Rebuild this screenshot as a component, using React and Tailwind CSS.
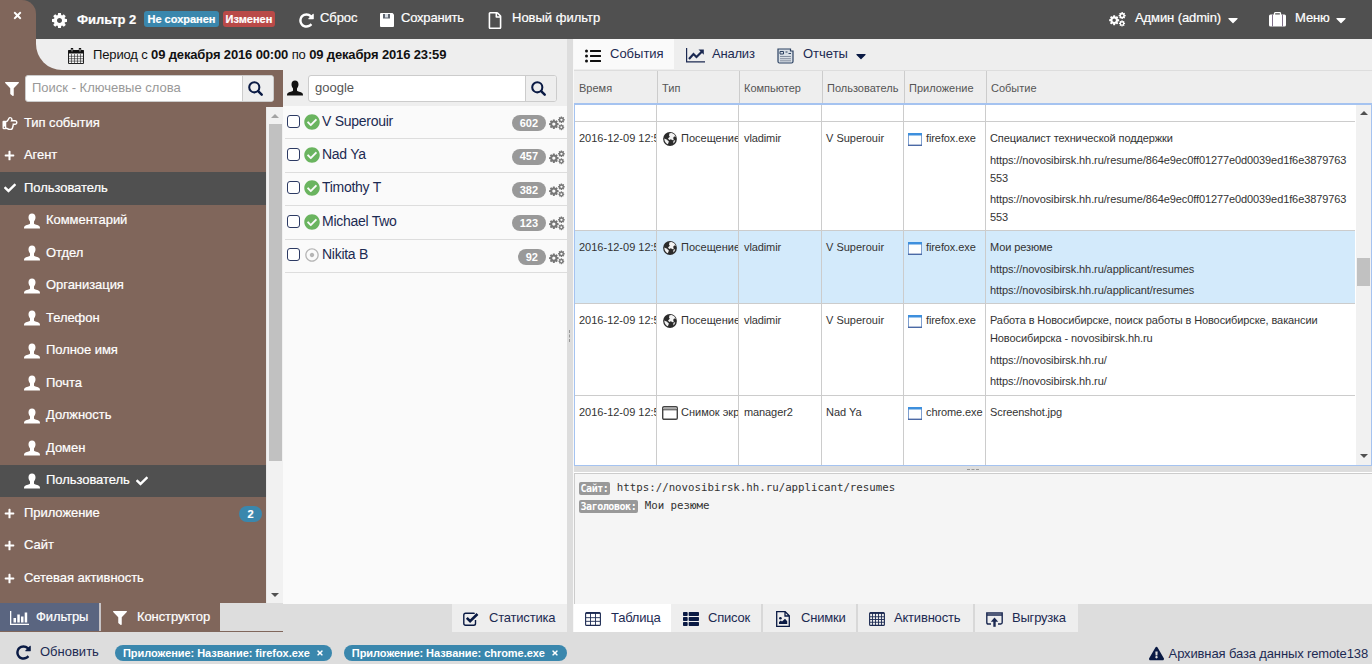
import { useState } from 'react';
import clsx from 'clsx';
import {
  FaCaretDown,
  FaCheck,
  FaCheckCircle,
  FaExclamationTriangle,
  FaFilter,
  FaListUl,
  FaPlus,
  FaRegDotCircle,
  FaRegFile,
  FaRegHandPointRight,
  FaThList,
  FaTimes,
} from 'react-icons/fa';

const gearPath =
  'M1152 896q0-106-75-181t-181-75-181 75-75 181 75 181 181 75 181-75 75-181zm512-109v222q0 12-8 23t-20 13l-185 28q-19 54-39 91 35 50 107 138 10 12 10 25t-9 23q-27 37-99 108t-94 71q-12 0-26-9l-138-108q-44 23-91 38-16 136-29 186-7 28-36 28h-222q-14 0-24.500-8.500t-11.500-21.500l-28-184q-49-16-90-37l-141 107q-10 9-25 9-14 0-25-11-126-114-165-168-7-10-7-23 0-12 8-23 15-21 51-66.500t54-70.500q-27-50-41-99l-183-27q-13-2-21-12.500t-8-23.500v-222q0-12 8-23t19-13l186-28q14-46 39-92-40-57-107-138-10-12-10-24 0-10 9-23 26-36 98.500-107.500t94.500-71.500q13 0 26 10l138 107q44-23 91-38 16-136 29-186 7-28 36-28h222q14 0 24.500 8.500t11.500 21.500l28 184q49 16 90 37l142-107q9-9 24-9 13 0 25 10 129 119 165 170 7 8 7 22 0 12-8 23-15 21-51 66.500t-54 70.500q26 50 41 98l183 28q13 2 21 12.500t8 23.500z';

function GearIcon({ className }) {
  return (
    <svg viewBox="128 128 1536 1536" fill="currentColor" className={className}>
      <path d={gearPath} />
    </svg>
  );
}

function GearsIcon({ className }) {
  return (
    <svg viewBox="0 0 1900 1700" fill="currentColor" className={className}>
      <path d={gearPath} transform="translate(-90 270) scale(.74)" />
      <path d={gearPath} transform="translate(1010 -60) scale(.52)" />
      <path d={gearPath} transform="translate(1060 890) scale(.45)" />
    </svg>
  );
}

function RepeatIcon({ className }) {
  return (
    <svg viewBox="0 0 1792 1792" fill="currentColor" className={className}>
      <path d="M1664 256v448q0 26-19 45t-45 19h-448q-42 0-59-40-17-39 14-69l138-138q-148-137-349-137-104 0-198.500 40.500t-163.500 109.500-109.500 163.500-40.500 198.500 40.500 198.500 109.500 163.500 163.500 109.500 198.500 40.500q119 0 225-52t179-147q7-10 23-12 15 0 25 9l137 138q9 8 9.500 20.500t-7.500 22.500q-109 132-264 204.500t-327 72.500q-156 0-298-61t-245-164-164-245-61-298 61-298 164-245 245-164 298-61q147 0 284.500 55.500t244.500 156.500l130-129q29-31 70-14 39 17 39 59z" />
    </svg>
  );
}

function SearchIcon({ className }) {
  return (
    <svg viewBox="0 0 16 16" fill="none" stroke="currentColor" className={className}>
      <circle cx="6.700" cy="6.700" r="5.400" strokeWidth="2.200" />
      <path d="M10.800 10.800l3.800 3.800" strokeWidth="2.600" strokeLinecap="round" />
    </svg>
  );
}

function PersonIcon({ className }) {
  return (
    <svg viewBox="0 0 16 16" fill="currentColor" className={className}>
      <path d="M8 .5c2.200 0 3.500 1.400 3.500 3.700 0 1.700-.6 3.200-1.500 4.200v2c0 .5.400.7.900.9 1.500.5 3.400 1 4.300 1.700.6.500.8 1.200.8 2.500H0c0-1.300.2-2 .8-2.500.9-.7 2.800-1.200 4.300-1.700.5-.2.9-.4.9-.9v-2c-.9-1-1.500-2.500-1.500-4.200C4.500 1.900 5.800.5 8 .5z" />
    </svg>
  );
}

function SaveIcon({ className }) {
  return (
    <svg viewBox="0 0 14 14" className={className}>
      <path d="M1 0h11.500L14 1.500V13q0 1-1 1H1q-1 0-1-1V1q0-1 1-1z" fill="#fff" />
      <path d="M3 1h7v4.500H3z" fill="#5f6670" />
      <path d="M5 1h3v3.500H5z" fill="#d5dbe3" />
    </svg>
  );
}

function SuitcaseIcon({ className }) {
  return (
    <svg viewBox="0 0 17 15" className={className}>
      <path d="M5.500 3V1.500q0-.8.800-.8h4.400q.8 0 .8.800V3" fill="none" stroke="#fff" strokeWidth="1.300" />
      <rect y="2.500" width="17" height="12" rx="1.500" fill="#fff" />
      <path d="M3.500 2.500v12M13.500 2.500v12" stroke="#80708a" strokeWidth="1" />
    </svg>
  );
}

function ChartIcon({ className }) {
  return (
    <svg viewBox="0 0 19 15" className={className} fill="none" stroke="currentColor">
      <path d="M.6 0v13.900H19" strokeWidth="1.200" />
      <path d="M3 11l4.500-5 3 3L16 3.500" strokeWidth="2.200" />
      <path d="M12.500 1.500h5.300v5.200z" fill="currentColor" stroke="none" />
    </svg>
  );
}

function CheckSquareIcon({ className }) {
  return (
    <svg viewBox="0 0 16 14" className={className} fill="none" stroke="currentColor">
      <path d="M12.500 8v3.500q0 1.800-1.800 1.800H2.600Q.8 13.300.8 11.500V3q0-1.800 1.800-1.800h8q.8 0 1.200.3" strokeWidth="1.400" />
      <path d="M3.800 5.800l3.300 3.300L14.500 2" strokeWidth="2.600" />
    </svg>
  );
}

function CalendarIcon({ className }) {
  return (
    <svg viewBox="0 0 16 16" className={className}>
      <path d="M.5 2.500h15v13H.5z" fill="#f5f5f5" stroke="#222" />
      <path d="M.5 2h15v3.500H.5z" fill="#111" />
      <path d="M.5 8.300h15M.5 10.700h15M.5 13.100h15M3.500 6v9.500M6.500 6v9.500M9.500 6v9.500M12.500 6v9.500" stroke="#222" strokeWidth=".6" />
      <path d="M4 .8v2.700M12 .8v2.700" stroke="#111" strokeWidth="2.400" strokeLinecap="round" />
      <path d="M4 1v2.500M12 1v2.500" stroke="#ddd" strokeWidth=".8" />
    </svg>
  );
}

function GlobeIcon({ className }) {
  return (
    <svg viewBox="0 0 14 14" className={className}>
      <circle cx="7" cy="7" r="6.900" fill="#2b2b2b" />
      <path d="M6.500 1.200l2.200-.2 2.500 1.300 1.700 2.500-1.800-.3-1 1.500.8 1.500-1.200.7-1.900-1L6.300 8 5 6.500l1.800-1.700L6 3.500z" fill="#f3f3f3" />
      <path d="M1.200 6.500l2.300 1 2.300 1.800-.3 1.500-.7 1.500-1.700-1-1.300-2z" fill="#f3f3f3" />
      <path d="M10.300 8.700l1.900-.7-.4 2-1.600 1.500z" fill="#cfcfcf" />
    </svg>
  );
}

function WindowIcon({ className }) {
  return (
    <svg viewBox="0 0 14 13" className={className}>
      <path d="M.5.500h13v12H.5z" fill="#fdfefe" stroke="#7f9fcf" />
      <path d="M0 0h14v2.500H0z" fill="#3d8fdd" />
      <path d="M0 12.300h14" stroke="#4a69a5" strokeWidth="1.400" />
    </svg>
  );
}

function ScreenIcon({ className }) {
  return (
    <svg viewBox="0 0 16 14" className={className}>
      <rect x=".7" y=".7" width="14.600" height="12.600" rx="1.300" fill="#fff" stroke="#444" strokeWidth="1.400" />
      <path d="M1.400 2.500h13.200" stroke="#aaa" strokeWidth="1.600" />
      <path d="M1 3.800h14" stroke="#444" strokeWidth="1" />
    </svg>
  );
}

function BarsIcon({ className }) {
  return (
    <svg viewBox="0 0 19 14" className={className} fill="currentColor">
      <path d="M0 0h1.300v12.700H19V14H0zM3.500 7H6v4.500H3.500zM7.300 3.500h2.500v8H7.300zM11 5.500h2.500v6H11zM14.700 1.500h2.500v10h-2.500z" />
    </svg>
  );
}

function GridIcon({ className, rows = 3, cols = 3 }) {
  const lines = [];
  for (let i = 1; i < cols; i++) lines.push(`M${(i * 15) / cols + 0.5} 1v12`);
  for (let i = 1; i < rows; i++) lines.push(`M1 ${2 + (i * 11) / rows}h14`);
  return (
    <svg viewBox="0 0 16 14" className={className} fill="none" stroke="currentColor">
      <rect x=".6" y=".6" width="14.800" height="12.800" rx="1" strokeWidth="1.100" />
      <path d="M1 1.200h14" strokeWidth="1.400" />
      <path d={lines.join('')} strokeWidth=".9" />
    </svg>
  );
}

function ReportIcon({ className }) {
  return (
    <svg viewBox="0 0 17 16" className={className} fill="none" stroke="#2c4262">
      <path d="M1 1h12.500v2H16v10.500q0 1.500-1.500 1.500h-12Q1 15 1 13.500z" fill="#d8dfe6" strokeWidth="1.200" />
      <path d="M3 3.500h3.500v2.500H3zM8.500 4h2M11.500 5.500H14" strokeWidth="1" />
      <path d="M3 8.500h11M3 10.700h11M3 12.800h11" stroke="#7c8798" strokeWidth=".9" />
    </svg>
  );
}

function PictureIcon({ className }) {
  return (
    <svg viewBox="0 0 14 16" className={className} fill="none" stroke="currentColor" strokeWidth="1.300">
      <path d="M.7.700h8.500l4.100 4v10.600H.7zM9 1v4h4" />
      <path d="M3 13v-2l1.800-1.500 1.200 1L9 7.800l2.200 2.400V13z" fill="currentColor" stroke="none" />
      <circle cx="4.400" cy="7.300" r="1.300" fill="currentColor" stroke="none" />
    </svg>
  );
}

function UploadIcon({ className }) {
  return (
    <svg viewBox="0 0 17 15" className={className} fill="none" stroke="currentColor" strokeWidth="1.400">
      <path d="M5 12H2.200Q.8 12 .8 10.600V1h15.400v9.600q0 1.400-1.400 1.400H12M1 3h15" />
      <path d="M8.500 14.800V7.500" strokeWidth="2.400" />
      <path d="M4.800 9.700L8.500 5.500l3.700 4.200z" fill="currentColor" stroke="none" />
    </svg>
  );
}

const filterGroups = [
  { label: 'Тип события', icon: 'hand' },
  { label: 'Агент', icon: 'plus' },
  { label: 'Пользователь', icon: 'check', active: true },
  { label: 'Комментарий', child: true },
  { label: 'Отдел', child: true },
  { label: 'Организация', child: true },
  { label: 'Телефон', child: true },
  { label: 'Полное имя', child: true },
  { label: 'Почта', child: true },
  { label: 'Должность', child: true },
  { label: 'Домен', child: true },
  { label: 'Пользователь', child: true, active: true, checked: true },
  { label: 'Приложение', icon: 'plus', count: 2 },
  { label: 'Сайт', icon: 'plus' },
  { label: 'Сетевая активность', icon: 'plus' },
];

const users = [
  { name: 'V Superouir', count: 602, online: true },
  { name: 'Nad Ya', count: 457, online: true },
  { name: 'Timothy T', count: 382, online: true },
  { name: 'Michael Two', count: 123, online: true },
  { name: 'Nikita B', count: 92, online: false },
];

const columns = ['Время', 'Тип', 'Компьютер', 'Пользователь', 'Приложение', 'Событие'];

const resumeUrl = ['https://novosibirsk.hh.ru/resume/864e9ec0ff01277e0d0039ed1f6e3879763', '553'];

const events = [
  {
    height: 'h-[109px]',
    type: 'Посещение',
    computer: 'vladimir',
    user: 'V Superouir',
    app: 'firefox.exe',
    lines: [['Специалист технической поддержки'], resumeUrl, resumeUrl],
  },
  {
    height: 'h-[73px]',
    type: 'Посещение',
    computer: 'vladimir',
    user: 'V Superouir',
    app: 'firefox.exe',
    selected: true,
    lines: [
      ['Мои резюме'],
      ['https://novosibirsk.hh.ru/applicant/resumes'],
      ['https://novosibirsk.hh.ru/applicant/resumes'],
    ],
  },
  {
    height: 'h-[92px]',
    type: 'Посещение',
    computer: 'vladimir',
    user: 'V Superouir',
    app: 'firefox.exe',
    lines: [
      ['Работа в Новосибирске, поиск работы в Новосибирске, вакансии', 'Новосибирска - novosibirsk.hh.ru'],
      ['https://novosibirsk.hh.ru/'],
      ['https://novosibirsk.hh.ru/'],
    ],
  },
  {
    height: 'h-[69px]',
    type: 'Снимок экр',
    screen: true,
    computer: 'manager2',
    user: 'Nad Ya',
    app: 'chrome.exe',
    lines: [['Screenshot.jpg']],
  },
];

function TopBar() {
  return (
    <header className="flex h-[39px] shrink-0 bg-[#505050] text-[13px] text-white">
      <div className="w-9 shrink-0 rounded-tr-[14px] bg-[#80665b] pt-[10px] pl-3">
        <FaTimes className="size-[11px]" />
      </div>
      <div className="flex h-[36px] flex-1 items-center [-webkit-text-stroke:0.2px]">
        <GearIcon className="mt-[5px] ml-4 size-[15px]" />
        <span className="mt-[3px] ml-[10px] w-[67px] font-bold">Фильтр 2</span>
        <span className="mt-[2px] flex h-4 w-[75px] items-center justify-center rounded-[3px] bg-[#3a87ad] text-[11px] font-bold">
          Не сохранен
        </span>
        <span className="mt-[2px] ml-1 flex h-4 w-[52px] items-center justify-center rounded-[3px] bg-[#b94a48] text-[11px] font-bold">
          Изменен
        </span>
        <RepeatIcon className="mt-1 ml-[23px] size-[17px]" />
        <span className="ml-[5px] w-[60px] tracking-[-0.1px]">Сброс</span>
        <SaveIcon className="mt-[3px] size-[14px]" />
        <span className="ml-[7px] w-[87px] tracking-[-0.2px]">Сохранить</span>
        <FaRegFile className="mt-1 h-[17px] w-[14px]" />
        <span className="ml-[10px]">Новый фильтр</span>
        <GearsIcon className="mt-[3px] ml-auto h-[15px] w-[17px]" />
        <span className="ml-[9px] w-[90px] tracking-[-0.1px]">Админ (admin)</span>
        <FaCaretDown className="mt-[3px] size-4" />
        <SuitcaseIcon className="mt-[3px] ml-[28px] h-[15px] w-[17px]" />
        <span className="ml-[9px] w-[38px] tracking-[-0.1px]">Меню</span>
        <FaCaretDown className="mt-[3px] mr-[23px] size-4" />
      </div>
    </header>
  );
}

function SearchBox({ value, placeholder, onChange }) {
  return (
    <div className="flex h-[27px] w-[249px] overflow-hidden rounded-[3px] border border-[#ccc] bg-white">
      <input
        className="w-[216px] px-[6px] pb-px text-[13px] text-[#555] outline-none placeholder:text-[#999]"
        value={value}
        placeholder={placeholder}
        onChange={(e) => onChange(e.target.value)}
      />
      <button className="flex flex-1 items-center justify-center border-l border-[#ccc] bg-[#eee] pr-[5px]">
        <SearchIcon className="size-[15px] text-[#0a1a44]" />
      </button>
    </div>
  );
}

function FilterRow({ item }) {
  return (
    <li
      className={clsx(
        'flex h-[32.5px] items-center pb-[2px] text-[13px] tracking-[-0.05px] text-white [-webkit-text-stroke:0.2px]',
        item.active && 'bg-[#505050]'
      )}
    >
      {item.child ? (
        <PersonIcon className="mt-[2px] mr-[6px] ml-6 size-4" />
      ) : (
        <span className="mt-[2px] flex w-6 items-center pl-[2px]">
          {item.icon === 'hand' && <FaRegHandPointRight className="h-[15px] w-4" />}
          {item.icon === 'plus' && <FaPlus className="ml-[2px] size-[11px]" />}
          {item.icon === 'check' && <FaCheck className="ml-[2px] size-3" />}
        </span>
      )}
      <span>{item.label}</span>
      {item.checked && <FaCheck className="mt-[2px] ml-[6px] size-3" />}
      {item.count && (
        <span className="mt-1 mr-1 ml-auto flex h-4 w-[23px] items-center justify-center rounded-full bg-[#3a87ad] text-[11px] font-bold">
          {item.count}
        </span>
      )}
    </li>
  );
}

function Sidebar() {
  const [query, setQuery] = useState('');
  return (
    <aside className="flex w-[283px] shrink-0 flex-col bg-[#80665b]">
      <div className="flex h-[37px] shrink-0 pt-[5px]">
        <FaFilter className="mt-[7px] mr-[6px] ml-[5px] size-[14px] text-white" />
        <SearchBox value={query} placeholder="Поиск - Ключевые слова" onChange={setQuery} />
      </div>
      <div className="flex min-h-0 flex-1">
        <ul className="w-[266px]">
          {filterGroups.map((item, i) => (
            <FilterRow key={i} item={item} />
          ))}
        </ul>
        <div className="flex w-[17px] flex-col items-center border-l border-[#e8e8e8] bg-[#f1f1f1]">
          <span className="mt-[7px] border-x-4 border-b-4 border-transparent border-b-[#a3a3a3]" />
          <div className="mt-[6px] h-[337px] w-[13px] bg-[#c1c1c1]" />
          <span className="mt-auto mb-[6px] border-x-4 border-t-4 border-transparent border-t-[#505050]" />
        </div>
      </div>
      <div className="flex h-[29px] shrink-0 border-b border-[#80665b] bg-[#ddd] text-[13px] tracking-[-0.1px] text-white [-webkit-text-stroke:0.2px]">
        <div className="flex w-[101px] items-center border-r-2 border-[#c8c4c6] bg-[#5a6580] pl-[10px]">
          <BarsIcon className="mt-[2px] mr-[7px] h-[14px] w-[19px]" />
          Фильтры
        </div>
        <div className="flex w-[119px] items-center bg-[#80665b] pl-3">
          <FaFilter className="mt-[2px] mr-[10px] size-[14px]" />
          Конструктор
        </div>
      </div>
    </aside>
  );
}

function UserPanel() {
  const [query, setQuery] = useState('google');
  return (
    <section className="flex w-[284px] shrink-0 flex-col bg-[#fafafa]">
      <div className="flex h-9 shrink-0 bg-[#eee] pt-[5px]">
        <PersonIcon className="mt-[5px] mr-[5px] ml-1 size-4 text-[#111]" />
        <SearchBox value={query} onChange={setQuery} />
      </div>
      <ul className="flex-1 pl-[2px]">
        {users.map((user) => (
          <li key={user.name} className="flex h-[33.4px] items-center border-b border-[#ddd] pb-[2px] text-[#1c2a52]">
            <span className="ml-[2px] size-[13px] rounded-[3px] border border-[#2c3a63] bg-white" />
            {user.online ? (
              <FaCheckCircle className="mt-px ml-1 size-4 text-[#6ab45f]" />
            ) : (
              <FaRegDotCircle className="mt-px ml-[5px] mr-px size-[14px] text-[#b5b5b5]" />
            )}
            <span className="ml-[2px] text-[14px] tracking-[-0.28px]">{user.name}</span>
            <span className="mt-1 ml-auto flex h-4 items-center rounded-full bg-[#999] px-2 text-[11px] font-bold text-white">
              {user.count}
            </span>
            <GearsIcon className="mt-[5px] mr-[2px] ml-[3px] h-[15px] w-4 text-[#777]" />
          </li>
        ))}
      </ul>
      <div className="flex h-[28px] shrink-0 justify-end bg-[#ddd]">
        <div className="flex w-[115px] items-center bg-[#eee] pl-[11px] text-[13px] tracking-[-0.2px] text-[#1c2a52]">
          <CheckSquareIcon className="mt-px mr-[10px] h-[14px] w-4 text-[#0a1a44]" />
          Статистика
        </div>
      </div>
    </section>
  );
}

function EventTable() {
  return (
    <>
      <div className="grid h-[33px] shrink-0 grid-cols-[84px_82px_83px_82px_82px_1fr] border-t border-[#ddd] bg-[#eee] text-[11px] text-[#555]">
        {columns.map((name, i) => (
          <div
            key={name}
            className={clsx('flex items-center pt-[2px]', i ? 'pl-1' : 'pl-[5px]', i < 5 && 'border-r border-[#ccc]')}
          >
            {name}
          </div>
        ))}
      </div>
      <div className="flex h-[363px] shrink-0 border border-t-2 border-[#a5c3f0] bg-white text-[11px] text-[#333]">
        <div className="w-[780px] overflow-hidden">
          <EventRow height="h-[17px]" />
          {events.map((event, i) => (
            <EventRow key={i} {...event} last={i === events.length - 1} />
          ))}
        </div>
        <div className="ml-px flex flex-1 flex-col items-center bg-[#f1f1f1]">
          <span className="mt-[6px] border-x-4 border-b-4 border-transparent border-b-[#505050]" />
          <div className="mt-[143px] h-7 w-[13px] bg-[#c1c1c1]" />
          <span className="mt-auto mb-[7px] border-x-4 border-t-4 border-transparent border-t-[#505050]" />
        </div>
      </div>
    </>
  );
}

function EventRow({ height, type, screen, computer, user, app, lines, selected, last }) {
  const cell = 'overflow-hidden border-r border-[#ccc] pt-[7px] leading-[18px]';
  return (
    <div
      className={clsx(
        'grid grid-cols-[82px_82px_83px_82px_82px_1fr] whitespace-nowrap',
        height,
        !last && 'border-b border-[#ccc]',
        selected && 'bg-[#d3eafb]'
      )}
    >
      <div className={clsx(cell, 'pl-1')}>{type && '2016-12-09 12:58'}</div>
      <div className={clsx(cell, 'flex items-start pl-[5px]')}>
        {type && (
          <>
            {screen ? (
              <ScreenIcon className="mt-[3px] mr-[3px] h-[14px] w-4 shrink-0" />
            ) : (
              <GlobeIcon className="mt-[3px] mr-1 ml-px size-[14px] shrink-0" />
            )}
            {type}
          </>
        )}
      </div>
      <div className={clsx(cell, 'pl-[5px] tracking-[-0.1px]')}>{computer}</div>
      <div className={clsx(cell, 'pl-1')}>{user}</div>
      <div className={clsx(cell, 'flex items-start pl-1 tracking-[-0.1px]')}>
        {app && <WindowIcon className="mt-1 mr-1 h-[13px] w-[14px] shrink-0" />}
        {app}
      </div>
      <div className="flex flex-col gap-[3.5px] pt-[7px] pl-[4px] leading-[18px] tracking-[-0.1px]">
        {lines?.map((parts, i) => (
          <div key={i}>
            {parts.map((part) => (
              <p key={part}>{part}</p>
            ))}
          </div>
        ))}
      </div>
    </div>
  );
}

function DetailLine({ label, children }) {
  return (
    <div className="flex h-[18px] items-center gap-[7px]">
      <span className="flex h-[13px] items-center rounded-[2px] bg-[#999] px-[1.5px] text-[10px] font-bold tracking-[-0.45px] text-white">
        {label}
      </span>
      <span>{children}</span>
    </div>
  );
}

function Details() {
  return (
    <div className="flex-1 border-t border-l border-[#ccc] bg-[#f5f5f5] pt-[5px] pl-1 font-['DejaVu_Sans_Mono',monospace] text-[10.75px] text-[#333]">
      <DetailLine label="Сайт:">https://novosibirsk.hh.ru/applicant/resumes</DetailLine>
      <DetailLine label="Заголовок:">Мои резюме</DetailLine>
    </div>
  );
}

function ContentPanel() {
  return (
    <main className="flex min-w-0 flex-1 flex-col">
      <nav className="flex h-[31px] shrink-0 bg-[#eee] text-[13px] tracking-[-0.2px] text-[#1c2a52]">
        <div className="flex h-[30px] w-[100px] items-center bg-[#fafafa] pl-[11px]">
          <FaListUl className="mt-[3px] mr-[9px] size-4 text-[#111]" />
          <span className="tracking-normal">События</span>
        </div>
        <div className="flex h-[30px] w-[103px] items-center pl-3">
          <ChartIcon className="mt-[3px] mr-[7px] h-[15px] w-[19px]" />
          Анализ
        </div>
        <div className="flex h-[30px] items-center">
          <ReportIcon className="mt-[3px] mr-[9px] h-4 w-[17px]" />
          <span className="tracking-normal">Отчеты</span>
          <FaCaretDown className="mt-1 ml-[5px] size-4 text-[#0a1a44]" />
        </div>
      </nav>
      <EventTable />
      <div className="flex h-[7px] shrink-0 items-center justify-center border-b border-white bg-[#ddd]">
        <span className="w-3 border-t border-dashed border-[#999]" />
      </div>
      <Details />
      <nav className="flex h-[28px] shrink-0 bg-[#ddd] text-[13px] tracking-[-0.2px] text-[#1c2a52]">
        <div className="flex w-[97px] items-center bg-white pl-[11px]">
          <GridIcon className="mt-0.5 mr-[10px] h-[14px] w-4" />
          Таблица
        </div>
        <div className="flex w-[92px] items-center border-r-2 border-[#d8d8d8] bg-[#eee] pl-3">
          <FaThList className="mt-0.5 mr-[9px] size-4 text-[#0a1a44]" />
          Список
        </div>
        <div className="flex w-[95px] items-center border-r-2 border-[#d8d8d8] bg-[#eee] pl-[13px]">
          <PictureIcon className="mt-0.5 mr-[11px] h-4 w-[14px] text-[#0a1a44]" />
          Снимки
        </div>
        <div className="flex w-[117px] items-center border-r-2 border-[#d8d8d8] bg-[#eee] pl-[11px]">
          <GridIcon rows={4} cols={5} className="mt-0.5 mr-[9px] h-[14px] w-4" />
          Активность
        </div>
        <div className="flex w-[103px] items-center bg-[#eee] pl-[11px]">
          <UploadIcon className="mt-0.5 mr-[9px] h-[15px] w-[17px]" />
          Выгрузка
        </div>
      </nav>
    </main>
  );
}

function FilterTag({ children }) {
  return (
    <span className="mt-[3px] flex h-[16px] items-center rounded-full bg-[#3a87ad] px-2 text-[11px] font-bold tracking-[-0.05px] text-white">
      {children}
      <FaTimes className="ml-[6px] size-2" />
    </span>
  );
}

export default function App() {
  return (
    <div className="flex h-[664px] w-[1372px] flex-col overflow-hidden bg-[#ddd] font-['Liberation_Sans',Arial,sans-serif] whitespace-nowrap">
      <TopBar />
      <div className="flex min-h-0 flex-1">
        <div className="flex w-[567px] shrink-0 flex-col">
          <div className="h-[31px] shrink-0 bg-[#80665b] pl-9">
            <div className="flex h-full items-center rounded-bl-[26px] bg-[#eee] pl-8 text-[13px] tracking-[-0.14px] text-[#111]">
              <CalendarIcon className="mt-[3px] mr-[9px] size-4" />
              <p>
                Период с <b>09 декабря 2016 00:00</b> по <b>09 декабря 2016 23:59</b>
              </p>
            </div>
          </div>
          <div className="flex min-h-0 flex-1">
            <Sidebar />
            <UserPanel />
          </div>
        </div>
        <div className="flex w-[7px] shrink-0 items-center border-r border-[#f8f8f8] bg-[#ddd] pl-[2px]">
          <span className="h-3 border-l border-dashed border-[#999]" />
        </div>
        <ContentPanel />
      </div>
      <footer className="flex h-8 shrink-0 items-center pt-[7px] text-[13px] text-[#1c2a52]">
        <RepeatIcon className="mt-[2px] mr-2 ml-[15px] size-[17px] text-[#0a1a44]" />
        <span className="mt-px mr-[17px] w-[58px]">Обновить</span>
        <FilterTag>Приложение: Название: firefox.exe</FilterTag>
        <span className="w-3" />
        <FilterTag>Приложение: Название: chrome.exe</FilterTag>
        <FaExclamationTriangle className="mt-1 mr-[5px] ml-auto size-[15px] text-[#0a1a44]" />
        <span className="mt-1 mr-1 tracking-[-0.13px]">Архивная база данных remote138</span>
      </footer>
    </div>
  );
}
